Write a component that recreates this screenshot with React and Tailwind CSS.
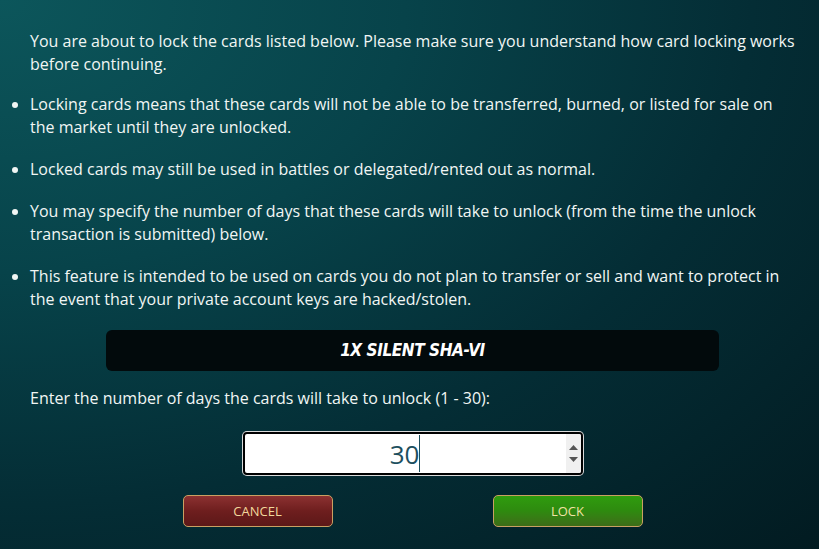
import React from 'react';

const BULLETS = [
  'Locking cards means that these cards will not be able to be transferred, burned, or listed for sale on the market until they are unlocked.',
  'Locked cards may still be used in battles or delegated/rented out as normal.',
  'You may specify the number of days that these cards will take to unlock (from the time the unlock transaction is submitted) below.',
  'This feature is intended to be used on cards you do not plan to transfer or sell and want to protect in the event that your private account keys are hacked/stolen.',
];

/**
 * Fake number field with centred value, caret and spinner
 */
function DaysInput({ value }) {
  return (
    <div className="w-[340px] h-[43px] rounded-[4px] border-2 border-black bg-white ring-1 ring-[#d9d9d9] flex items-stretch overflow-hidden">
      <div className="flex-1 flex items-center justify-center">
        <span className="text-[26px] leading-none text-[#1d4f5e]">{value}</span>
        <span className="w-px h-[37px] bg-[#1d4f5e]" />
      </div>
      <div className="w-[15px] bg-[#f0f0f0] flex flex-col items-center justify-center gap-[7px]">
        <svg width="9" height="5" viewBox="0 0 9 5"><path d="M0 5 L4.5 0 L9 5 Z" fill="#555" /></svg>
        <svg width="9" height="5" viewBox="0 0 9 5"><path d="M0 0 L4.5 5 L9 0 Z" fill="#555" /></svg>
      </div>
    </div>
  );
}

export default function App() {
  return (
    <div
      className="w-[819px] h-[549px] overflow-hidden bg-[radial-gradient(ellipse_at_top_left,#0c565b_0%,#07434a_35%,#042d35_65%,#021b21_100%)] text-[#f1f6f4]"
      style={{ fontFamily: "'Open Sans', sans-serif" }}
    >
      <div className="w-[765px] ml-[30px] pt-[30px] text-[16px] leading-[23px]">
        <p className="mb-[17px]">
          You are about to lock the cards listed below. Please make sure you understand how card locking works before continuing.
        </p>

        <ul className="list-disc list-outside">
          {BULLETS.map((b, i) => (
            <li key={i} className="mb-[19px]">{b}</li>
          ))}
        </ul>

        {/* Card list */}
        <div className="mt-[11px] mx-auto w-[613px] h-[41px] rounded-[6px] bg-[#020a0c] flex items-center justify-center">
          <span
            className="text-white font-bold italic text-[17px] tracking-tight"
            style={{ fontFamily: "'DejaVu Sans Condensed', 'DejaVu Sans', sans-serif" }}
          >
            1X SILENT SHA-VI
          </span>
        </div>

        <p className="mt-[16px]">Enter the number of days the cards will take to unlock (1 - 30):</p>

        <div className="mt-[22px] flex justify-center">
          <DaysInput value="30" />
        </div>

        <div className="mt-[20px] flex justify-center gap-[160px]">
          <button className="w-[150px] h-[32px] rounded-[5px] border border-[#c9a062] bg-linear-to-b from-[#8c3131] via-[#6e1e1e] to-[#5c1818] text-[13px] font-medium text-[#f2d89c]">
            CANCEL
          </button>
          <button className="w-[150px] h-[32px] rounded-[5px] border border-[#c9a062] bg-linear-to-b from-[#2f9c0e] via-[#2e8a0f] to-[#3c6c18] text-[13px] font-medium text-[#f2e3a4]">
            LOCK
          </button>
        </div>
      </div>
    </div>
  );
}
